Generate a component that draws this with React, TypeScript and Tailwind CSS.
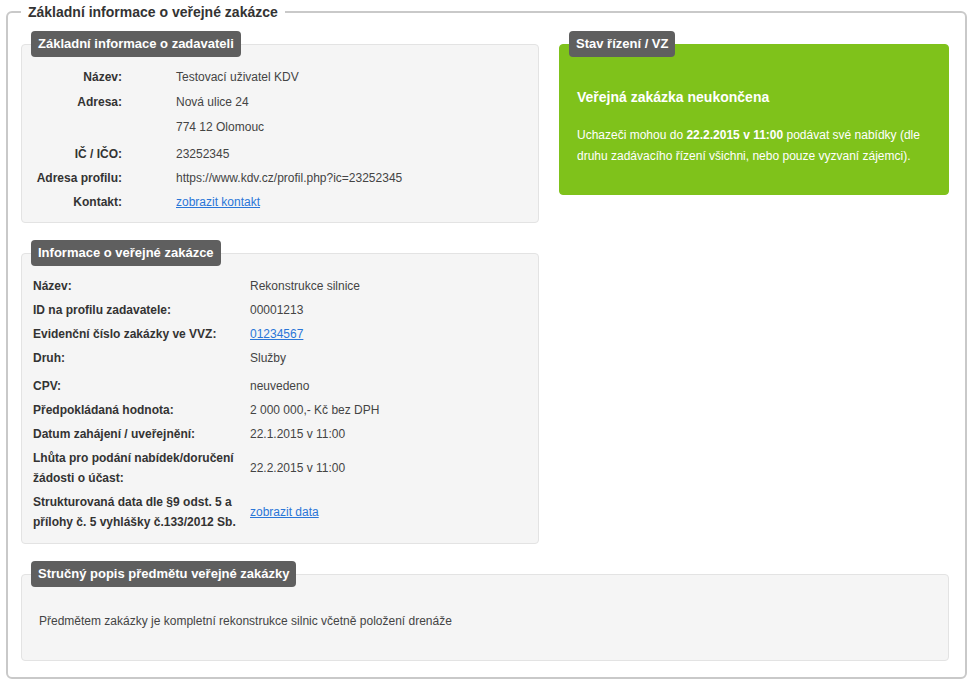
import React from 'react';

const font = { fontFamily: '"Liberation Sans", Arial, sans-serif' };

function Tab({ children }: { children: React.ReactNode }) {
  return (
    <div className="-mt-[14px] ml-[9px] w-fit rounded-[4px] bg-[#5f5f5f] px-[7px] text-[13px] font-bold leading-[26px] text-white">
      {children}
    </div>
  );
}

const zadavatel = [
  { label: 'Název:', value: ['Testovací uživatel KDV'] },
  { label: 'Adresa:', value: ['Nová ulice 24', '774 12 Olomouc'], extra: 'pt-[1px]' },
  { label: 'IČ / IČO:', value: ['23252345'], extra: 'mt-[2px]' },
  { label: 'Adresa profilu:', value: ['https://www.kdv.cz/profil.php?ic=23252345'] },
  { label: 'Kontakt:', link: 'zobrazit kontakt' },
];

type Row = { label: string[]; value?: string; link?: string; extra?: string };

const zakazka: Row[] = [
  { label: ['Název:'], value: 'Rekonstrukce silnice' },
  { label: ['ID na profilu zadavatele:'], value: '00001213' },
  { label: ['Evidenční číslo zakázky ve VVZ:'], link: '01234567' },
  { label: ['Druh:'], value: 'Služby' },
  { label: ['CPV:'], value: 'neuvedeno', extra: 'mt-[4px]' },
  { label: ['Předpokládaná hodnota:'], value: '2 000 000,- Kč bez DPH' },
  { label: ['Datum zahájení / uveřejnění:'], value: '22.1.2015 v 11:00' },
  { label: ['Lhůta pro podání nabídek/doručení', 'žádosti o účast:'], value: '22.2.2015 v 11:00', extra: 'mt-[2px]' },
  { label: ['Strukturovaná data dle §9 odst. 5 a', 'přílohy č. 5 vyhlášky č.133/2012 Sb.'], link: 'zobrazit data', extra: 'mt-[4px]' },
];

export default function App() {
  return (
    <div className="min-h-[682px] bg-white pt-[2px] text-[12px] text-[#444]" style={font}>
      <fieldset className="ml-[6px] w-[960px] rounded-[6px] border-2 border-[#c9c9c9] pl-[13px] pr-[16px] pb-[16px] pt-[9px]">
        <legend className="px-[7px] text-[14px] font-bold leading-[20px] text-[#333]">
          Základní informace o veřejné zakázce
        </legend>

        <div className="flex gap-[20px]">
          <div className="flex w-[518px] flex-col gap-[30px] pt-[13px]">
            {/* zadavatel */}
            <div className="flow-root rounded-[4px] border border-[#e3e3e3] bg-[#f5f5f5] pb-[8px]">
              <Tab>Základní informace o zadavateli</Tab>
              <div className="mt-[8px]">
                {zadavatel.map((r) => (
                  <div key={r.label} className={`flex ${r.extra ?? ''}`}>
                    <div className="w-[100px] text-right font-bold leading-[24px] text-[#333]">{r.label}</div>
                    <div className="ml-[54px]">
                      {r.value && r.value.length > 1 ? (
                        r.value.map((v) => (
                          <div key={v} className="leading-[25px]">{v}</div>
                        ))
                      ) : r.value ? (
                        <div className="leading-[24px]">{r.value[0]}</div>
                      ) : (
                        <a href="#" className="leading-[24px] text-[#2a76d8] underline">{r.link}</a>
                      )}
                    </div>
                  </div>
                ))}
              </div>
            </div>

            {/* zakazka */}
            <div className="flow-root rounded-[4px] border border-[#e3e3e3] bg-[#f5f5f5] pb-[11px]">
              <Tab>Informace o veřejné zakázce</Tab>
              <div className="mt-[8px] pl-[11px]">
                {zakazka.map((r) => (
                  <div key={r.label[0]} className={`flex items-center ${r.extra ?? ''}`}>
                    <div className={`w-[217px] font-bold text-[#333] ${r.label.length > 1 ? 'leading-[20px]' : 'leading-[24px]'}`}>
                      {r.label.map((l) => (
                        <div key={l}>{l}</div>
                      ))}
                    </div>
                    <div className="leading-[24px]">
                      {r.value ?? (
                        <a href="#" className="text-[#2a76d8] underline">{r.link}</a>
                      )}
                    </div>
                  </div>
                ))}
              </div>
            </div>
          </div>

          {/* stav */}
          <div className="w-[390px] pt-[13px]">
            <div className="flow-root rounded-[4px] border border-[#7fc21b] bg-[#7fc21b] pb-[27px] text-white">
              <Tab>Stav řízení / VZ</Tab>
              <div className="mt-[30px] pl-[17px] pr-[8px]">
                <div className="text-[14px] font-bold leading-[20px]">Veřejná zakázka neukončena</div>
                <p className="mt-[18px] leading-[21px]">
                  Uchazeči mohou do <b>22.2.2015 v 11:00</b> podávat své nabídky (dle
                  <br />
                  druhu zadávacího řízení všichni, nebo pouze vyzvaní zájemci).
                </p>
              </div>
            </div>
          </div>
        </div>

        {/* popis */}
        <div className="mt-[30px] flow-root rounded-[4px] border border-[#e3e3e3] bg-[#f5f5f5] pb-[29px]">
          <Tab>Stručný popis předmětu veřejné zakázky</Tab>
          <div className="mt-[24px] pl-[17px] leading-[20px]">
            Předmětem zakázky je kompletní rekonstrukce silnic včetně položení drenáže
          </div>
        </div>
      </fieldset>
    </div>
  );
}
